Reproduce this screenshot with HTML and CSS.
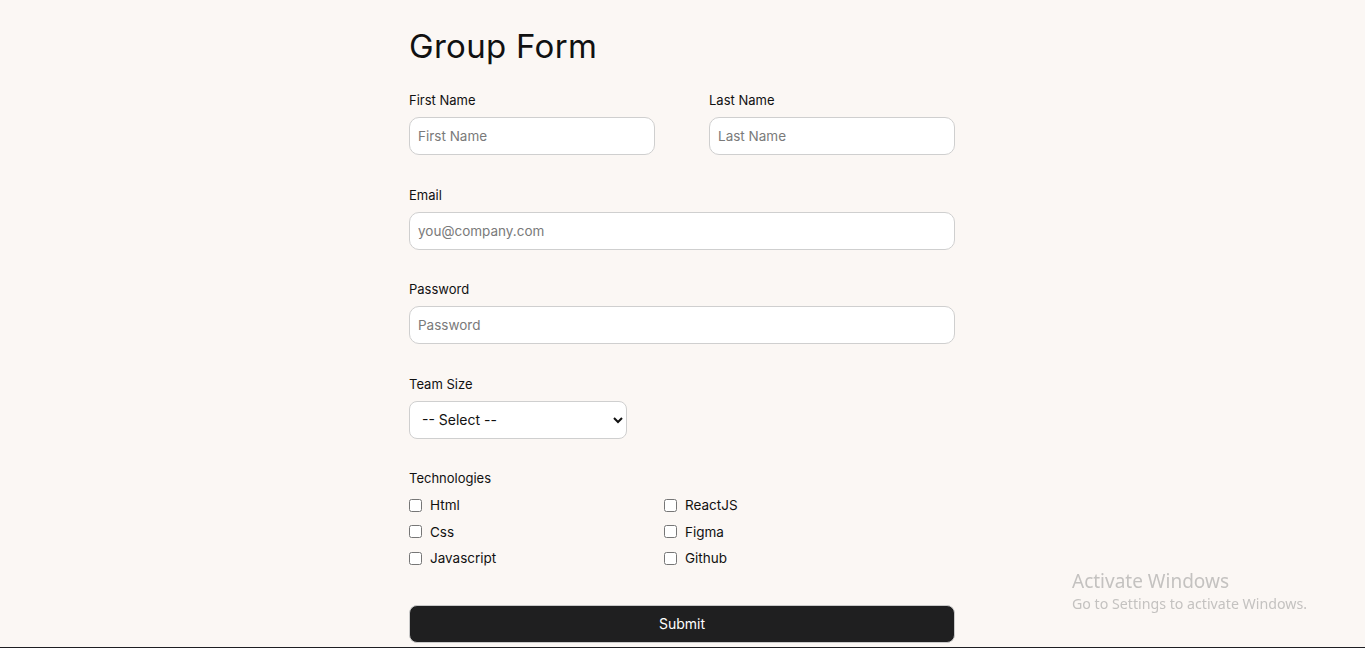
FILE: index.html
```html
<!DOCTYPE html>
<html lang="en">
<head>
<meta charset="utf-8">
<title>Group Form</title>
<link rel="stylesheet" href="styles.css">
</head>
<body>
<main class="page">
  <h1 class="title">Group Form</h1>
  <form class="form">
    <div class="row-2">
      <div class="group">
        <label class="label" for="fn">First Name</label>
        <input class="input" id="fn" type="text" placeholder="First Name">
      </div>
      <div class="group">
        <label class="label" for="ln">Last Name</label>
        <input class="input" id="ln" type="text" placeholder="Last Name">
      </div>
    </div>
    <div class="group">
      <label class="label" for="em">Email</label>
      <input class="input" id="em" type="email" placeholder="you@company.com">
    </div>
    <div class="group">
      <label class="label" for="pw">Password</label>
      <input class="input" id="pw" type="password" placeholder="Password">
    </div>
    <div class="group">
      <label class="label" for="ts">Team Size</label>
      <select class="select" id="ts">
        <option>-- Select --</option>
        <option>1-5</option>
        <option>6-10</option>
      </select>
    </div>
    <div class="group">
      <span class="label">Technologies</span>
      <div class="checks">
        <label class="check"><input type="checkbox"> Html</label>
        <label class="check"><input type="checkbox"> ReactJS</label>
        <label class="check"><input type="checkbox"> Css</label>
        <label class="check"><input type="checkbox"> Figma</label>
        <label class="check"><input type="checkbox"> Javascript</label>
        <label class="check"><input type="checkbox"> Github</label>
      </div>
    </div>
    <button class="submit" type="button">Submit</button>
  </form>
</main>
<div class="activate">
  <div class="activate-title">Activate Windows</div>
  <div class="activate-sub">Go to Settings to activate Windows.</div>
</div>
<div class="taskbar-edge"></div>
</body>
</html>
```
FILE: styles.css
```css
* { box-sizing: border-box; }
html, body { margin: 0; padding: 0; }
body {
  background: #fbf7f4;
  font-family: Inter, "Open Sans", sans-serif;
  color: #111;
}
.page {
  width: 547px;
  margin: 0 auto;
  padding-top: 24px;
}
.form {
  width: 546px;
  display: flex;
  flex-direction: column;
}
.title {
  margin: 0 0 22px;
  font-size: 33px;
  font-weight: 400;
  line-height: 44px;
  letter-spacing: 0.3px;
}
.row-2 {
  display: grid;
  grid-template-columns: 246px 246px;
  column-gap: 54px;
}
.group { display: flex; flex-direction: column; margin-bottom: 29.5px; }
.label {
  font-size: 13px;
  line-height: 20px;
  margin-bottom: 7px;
  color: #111;
}
.input {
  height: 38px;
  border: 1px solid #cfcfcf;
  border-radius: 10px;
  background: #fff;
  padding: 0 8px;
  font-family: inherit;
  font-size: 13.5px;
  color: #111;
  outline: none;
}
.input::placeholder { color: #7a7a7a; }
.select {
  width: 218px;
  height: 38px;
  border: 1px solid #cfcfcf;
  border-radius: 8px;
  background: #fff;
  padding: 0 8px;
  font-family: inherit;
  font-size: 14px;
  color: #111;
}
.checks {
  display: grid;
  grid-template-columns: 255px 255px;
  grid-auto-rows: 26.5px;
  margin-top: -3px;
}
.check {
  display: flex;
  align-items: center;
  gap: 8px;
  font-size: 13.5px;
  color: #111;
}
.check input {
  margin: 0;
  width: 13px;
  height: 13px;
}
.submit {
  margin-top: 4px;
  height: 38px;
  padding-bottom: 2px;
  border: 1px solid #c9c9c9;
  border-radius: 8px;
  background: #1f1f20;
  color: #fff;
  font-family: inherit;
  font-size: 14px;
  font-weight: 400;
}
.activate {
  position: fixed;
  left: 1072px;
  top: 570px;
  color: #c4c2c0;
  font-family: "Noto Sans", "Open Sans", sans-serif;
}
.activate-title { font-size: 19px; line-height: 23px; }
.activate-sub { font-size: 14.2px; line-height: 20px; margin-top: 1px; }
.taskbar-edge {
  position: fixed;
  left: 0;
  right: 0;
  bottom: 0;
  height: 1px;
  background: #1e1e22;
}
```
